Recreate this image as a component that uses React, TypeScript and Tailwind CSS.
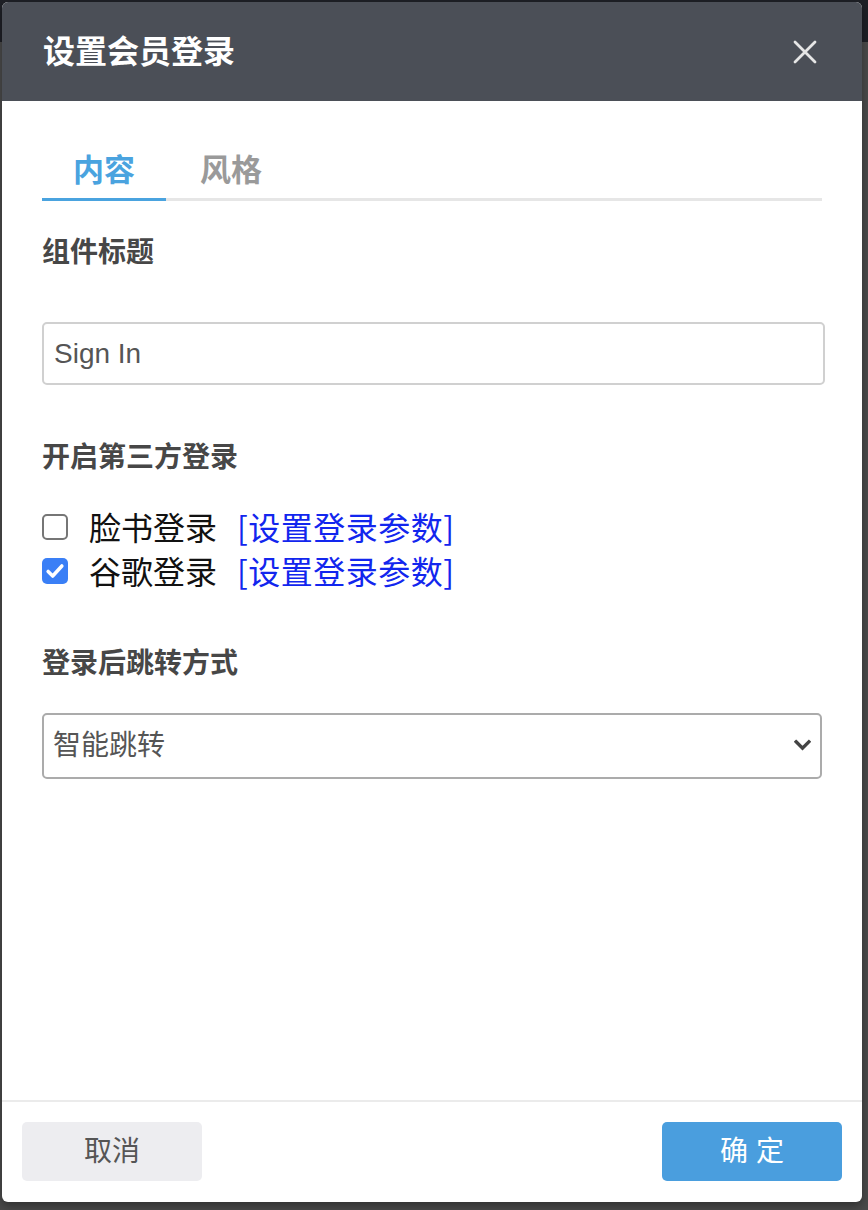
import { useState } from 'react';

function Checkbox({ checked, onChange }: { checked: boolean; onChange: () => void }) {
  return (
    <button
      type="button"
      onClick={onChange}
      className={
        checked
          ? 'flex h-[26px] w-[26px] shrink-0 items-center justify-center rounded-[5px] bg-[#3a7ff6]'
          : 'flex h-[26px] w-[26px] shrink-0 items-center justify-center rounded-[5px] border-2 border-[#767676] bg-white'
      }
    >
      {checked && (
        <svg viewBox="0 0 24 24" className="h-[22px] w-[22px]" fill="none">
          <path d="M4.5 12.5l5 5L19.5 6.5" stroke="#fff" strokeWidth="3.8" strokeLinecap="round" strokeLinejoin="round" />
        </svg>
      )}
    </button>
  );
}

function LoginOption({ label, checked, onChange }: { label: string; checked: boolean; onChange: () => void }) {
  return (
    <div className="flex h-[44px] items-center">
      <Checkbox checked={checked} onChange={onChange} />
      <div className="flex items-baseline">
        <span className="ml-[21px] text-[32px] leading-[44px] text-[#111]">{label}</span>
        <a className="ml-[20px] cursor-pointer font-['Noto_Sans_CJK_SC',sans-serif] text-[32px] leading-[44px] tracking-[0.5px] text-[#1226ee]">
          [设置登录参数]
        </a>
      </div>
    </div>
  );
}

export default function App() {
  const [tab, setTab] = useState<'content' | 'style'>('content');
  const [title, setTitle] = useState('Sign In');
  const [facebook, setFacebook] = useState(false);
  const [google, setGoogle] = useState(true);
  const [redirect, setRedirect] = useState('smart');

  return (
    <div className="min-h-[1210px] bg-[linear-gradient(#1e2026_0,#1e2026_42px,#4a4a4a_42px)] pt-[2px] pl-[2px] font-['Liberation_Sans','Noto_Sans_CJK_SC',sans-serif]">
      <div className="flex h-[1200px] w-[860px] flex-col rounded-[6px] bg-white shadow-[0_4px_10px_rgba(0,0,0,0.35)]">
        <div className="flex h-[99px] shrink-0 items-center justify-between rounded-t-[6px] bg-[#4b4f57] pl-[41px] pr-[44px]">
          <h1 className="text-[32px] leading-[38px] font-bold text-white">设置会员登录</h1>
          <button type="button" className="flex h-[26px] w-[26px] items-center justify-center">
            <svg viewBox="0 0 24 24" className="h-[24px] w-[24px]" fill="none">
              <path d="M2 2l20 20M22 2L2 22" stroke="#e6e6e6" strokeWidth="2.8" strokeLinecap="round" />
            </svg>
          </button>
        </div>

        <div className="flex flex-1 flex-col px-[40px]">
          <div className="mt-[51px] flex border-b-[3px] border-[#e6e6e6]">
            <button
              type="button"
              onClick={() => setTab('content')}
              className={
                tab === 'content'
                  ? '-mb-[3px] w-[124px] border-b-[3px] border-[#4aa3df] pb-[8px] text-center text-[31px] leading-[38px] font-bold text-[#4aa3df]'
                  : '-mb-[3px] w-[124px] border-b-[3px] border-transparent pb-[8px] text-center text-[31px] leading-[38px] font-bold text-[#9a9a9a]'
              }
            >
              内容
            </button>
            <button
              type="button"
              onClick={() => setTab('style')}
              className={
                tab === 'style'
                  ? '-mb-[3px] w-[124px] border-b-[3px] border-[#4aa3df] pb-[8px] pl-[6px] text-center text-[31px] leading-[38px] font-bold text-[#4aa3df]'
                  : '-mb-[3px] w-[124px] border-b-[3px] border-transparent pb-[8px] pl-[6px] text-center text-[31px] leading-[38px] font-bold text-[#9a9a9a]'
              }
            >
              风格
            </button>
          </div>

          <label className="mt-[35px] text-[28px] leading-[34px] font-bold text-[#474747]">组件标题</label>
          <input
            value={title}
            onChange={(e) => setTitle(e.target.value)}
            className="mt-[52px] -mr-[3px] h-[63px] rounded-[5px] border-2 border-[#d0d0d0] px-[10px] text-[28px] text-[#555] outline-none"
          />

          <label className="mt-[56px] text-[28px] leading-[34px] font-bold text-[#474747]">开启第三方登录</label>
          <div className="mt-[30px] flex flex-col">
            <LoginOption label="脸书登录" checked={facebook} onChange={() => setFacebook(!facebook)} />
            <LoginOption label="谷歌登录" checked={google} onChange={() => setGoogle(!google)} />
          </div>

          <label className="mt-[54px] text-[28px] leading-[34px] font-bold text-[#474747]">登录后跳转方式</label>
          <div className="relative mt-[32px]">
            <select
              value={redirect}
              onChange={(e) => setRedirect(e.target.value)}
              className="h-[66px] w-full appearance-none rounded-[5px] border-2 border-[#ababab] bg-white px-[9px] text-[28px] text-[#555] outline-none"
            >
              <option value="smart">智能跳转</option>
              <option value="home">返回首页</option>
              <option value="current">停留当前页</option>
            </select>
            <svg viewBox="0 0 16 12" className="pointer-events-none absolute top-[26px] right-[11px] h-[13px] w-[17px]" fill="none">
              <path d="M2 2.5l6 6 6-6" stroke="#444" strokeWidth="3.2" strokeLinecap="square" />
            </svg>
          </div>
        </div>

        <div className="flex shrink-0 items-center justify-between border-t-2 border-[#ebebeb] px-[20px] pt-[20px] pb-[21px]">
          <button type="button" className="h-[59px] w-[180px] rounded-[5px] bg-[#ededf0] text-[28px] text-[#555]">
            取消
          </button>
          <button type="button" className="h-[59px] w-[180px] rounded-[5px] bg-[#4a9ede] text-[28px] text-white">
            确 定
          </button>
        </div>
      </div>
    </div>
  );
}
